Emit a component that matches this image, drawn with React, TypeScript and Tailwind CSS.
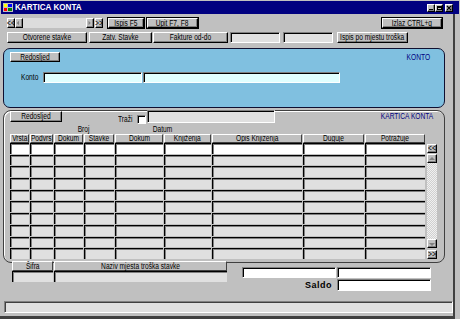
import React from "react";

const raised =
  "bg-[#c0c0c0] border border-t-white border-l-white border-r-black border-b-black shadow-[inset_-1px_-1px_0_#808080]";
const sunken =
  "border border-t-[#808080] border-l-[#808080] border-r-white border-b-white shadow-[inset_1px_1px_0_#000]";

function T({ children, o = "c" }: { children?: React.ReactNode; o?: "c" | "l" | "r" }) {
  const origin = o === "l" ? "origin-left" : o === "r" ? "origin-right" : "origin-center";
  return <span className={`inline-block whitespace-nowrap leading-none scale-x-[0.78] ${origin}`}>{children}</span>;
}

function Btn({ className = "", children }: { className?: string; children?: React.ReactNode }) {
  return (
    <div className={`${raised} flex items-center justify-center leading-none whitespace-nowrap ${className}`}>
      {children}
    </div>
  );
}

function DefBtn({ className = "", children }: { className?: string; children?: React.ReactNode }) {
  return (
    <div className={`border border-black flex ${className}`}>
      <div className={`${raised} flex-1 flex items-center justify-center leading-none whitespace-nowrap`}>
        {children}
      </div>
    </div>
  );
}

function Field({ className = "" }: { className?: string }) {
  return <div className={`${sunken} ${className}`} />;
}

function Tri({ dir }: { dir: "l" | "r" | "u" | "d" }) {
  const pts =
    dir === "l" ? "4,1 4,7 1,4" : dir === "r" ? "2,1 2,7 5,4" : dir === "u" ? "1,5 7,5 4,2" : "1,3 7,3 4,6";
  return (
    <svg width="8" height="8" viewBox="0 0 8 8">
      <polygon points={pts} fill="#808080" />
    </svg>
  );
}

const headers = [
  "Vrsta",
  "Podvrs",
  "Dokum",
  "Stavke",
  "Dokum",
  "Knjiženja",
  "Opis Knjizenja",
  "Duguje",
  "Potražuje",
];

const cellBase = "border-t border-l border-t-black border-l-black shadow-[inset_1px_1px_0_#808080]";

export default function App() {
  const rows = Array.from({ length: 10 }, (_, i) => i);
  return (
    <div className="w-[460px] h-[319px] bg-[#c0c0c0] overflow-hidden flex flex-col pt-[1px] text-[8.5px] text-black font-['Liberation_Sans',sans-serif]">
      {/* title bar */}
      <div className="h-[13px] mx-[1px] bg-[#000080] flex items-center pl-[2px] shrink-0">
        <svg width="10" height="9" viewBox="0 0 10 9">
          <rect x="0" y="0" width="10" height="9" fill="#c0c0c0" />
          <rect x="1" y="1" width="3" height="3" fill="#ffff00" />
          <rect x="5" y="1" width="4" height="3" fill="#0000ff" />
          <rect x="1" y="5" width="3" height="3" fill="#ff0000" />
          <rect x="5" y="5" width="4" height="3" fill="#008000" />
        </svg>
        <span className="ml-[2px] text-white font-bold text-[9px] leading-none inline-block scale-x-[0.9] origin-left">
          KARTICA KONTA
        </span>
        <div className="ml-auto mr-[6px] flex items-center">
          <div className={`${raised} w-[8px] h-[8px] flex items-end justify-center pb-[1px]`}>
            <div className="w-[4px] h-[1px] bg-black" />
          </div>
          <div className={`${raised} w-[8px] h-[8px] flex items-center justify-center`}>
            <div className="w-[5px] h-[4px] border border-black border-t-2" />
          </div>
          <div className={`${raised} ml-[2px] w-[8px] h-[8px] flex items-center justify-center`}>
            <svg width="6" height="6" viewBox="0 0 6 6">
              <path d="M1 1 L5 5 M5 1 L1 5" stroke="#000" strokeWidth="1.2" />
            </svg>
          </div>
        </div>
      </div>

      {/* body */}
      <div className="flex-1 w-[455px] flex flex-col border-r-2 border-b-[3px] border-r-[#404040] border-b-[#404040]">
        {/* row 1 */}
        <div className="mt-[3px] h-[12px] flex items-center pl-[7px] pr-[10px] shrink-0">
          <div className="w-[96px] h-[10px] flex">
            <Btn className="w-[8px] h-[10px]">
              <T>{"<<"}</T>
            </Btn>
            <Btn className="w-[8px] h-[10px]">
              <Tri dir="l" />
            </Btn>
            <div className="flex-1 h-[10px] bg-[#dcdcdc]" />
            <Btn className="w-[8px] h-[10px]">
              <Tri dir="r" />
            </Btn>
            <Btn className="ml-[1px] w-[8px] h-[10px]">
              <T>{">>"}</T>
            </Btn>
          </div>
          <DefBtn className="ml-[4px] w-[38px] h-[12px]">
            <T>Ispis F5</T>
          </DefBtn>
          <DefBtn className="ml-[1px] w-[53px] h-[12px]">
            <T>Upit F7, F8</T>
          </DefBtn>
          <DefBtn className="ml-auto w-[62px] h-[12px]">
            <T>Izlaz CTRL+q</T>
          </DefBtn>
        </div>

        {/* row 2 */}
        <div className="mt-[3px] h-[11px] flex pl-[7px] shrink-0">
          <Btn className="w-[80px] h-[11px]">
            <T>Otvorene stavke</T>
          </Btn>
          <Btn className="ml-[2px] w-[63px] h-[11px]">
            <T>Zatv. Stavke</T>
          </Btn>
          <Btn className="ml-[1px] w-[75px] h-[11px]">
            <T>Fakture od-do</T>
          </Btn>
          <Field className="ml-[2px] w-[50px] h-[11px] bg-[#e0e0e0]" />
          <Field className="ml-[3px] w-[50px] h-[11px] bg-[#e0e0e0]" />
          <Btn className="ml-[4px] w-[71px] h-[11px]">
            <T>Ispis po mjestu troška</T>
          </Btn>
        </div>

        {/* konto panel */}
        <div className="mt-[5px] ml-[3px] w-[442px] h-[60px] shrink-0 bg-[#80c0e0] border border-[#101030] rounded-[7px] flex flex-col">
          <div className="flex items-start pl-[6px] pt-[3px] pr-[14px]">
            <Btn className="w-[50px] h-[10px]">
              <T>Redosljed</T>
            </Btn>
            <span className="ml-auto -mt-[1px] text-[#000080]">
              <T o="r">KONTO</T>
            </span>
          </div>
          <div className="mt-[8px] flex items-center pl-[17px]">
            <span className="w-[22px] leading-none">
              <T o="l">Konto</T>
            </span>
            <Field className="w-[99px] h-[11px] bg-[#e0ffff]" />
            <Field className="ml-[1px] w-[197px] h-[11px] bg-[#e0ffff]" />
          </div>
        </div>

        {/* kartica panel */}
        <div className="mt-[2px] ml-[3px] w-[442px] h-[153px] shrink-0 border border-[#404040] rounded-[8px] shadow-[inset_1px_1px_0_#ffffff] flex flex-col">
          <div className="h-[13px] flex items-start shrink-0">
            <Btn className="ml-[6px] w-[52px] h-[11px]">
              <T>Redosljed</T>
            </Btn>
            <span className="ml-[56px] mt-[4px] w-[16px] leading-none">
              <T o="l">Traži</T>
            </span>
            <div className="ml-[3px] mt-[4px] w-[9px] h-[9px] bg-white border border-t-[#808080] border-l-[#808080] border-r-white border-b-white shadow-[inset_1px_1px_0_#000]" />
            <Field className="ml-[1px] -mt-[1px] w-[128px] h-[13px] bg-[#e0e0e0]" />
            <span className="ml-auto mr-[11px] mt-[1px] text-[#000080] leading-none">
              <T o="r">KARTICA KONTA</T>
            </span>
          </div>
          <div className="h-[10px] pl-[6px] shrink-0 grid grid-cols-[19px_23px_29px_30px_48px_47px_90px_61px_60px] gap-x-[1px] items-end">
            <div className="col-start-3 col-span-2 text-center leading-none pb-[1px]">
              <T>Broj</T>
            </div>
            <div className="col-start-5 col-span-2 text-center leading-none pb-[1px]">
              <T>Datum</T>
            </div>
          </div>
          <div className="h-[9px] pl-[6px] shrink-0 grid grid-cols-[19px_23px_29px_30px_48px_47px_90px_61px_60px] gap-x-[1px]">
            {headers.map((h, i) => (
              <div
                key={i}
                className="bg-[#c0c0c0] border border-t-white border-l-white border-r-[#404040] border-b-[#404040] flex items-center justify-center leading-none whitespace-nowrap overflow-hidden"
              >
                <T>{h}</T>
              </div>
            ))}
          </div>
          <div className="flex pl-[6px] shrink-0">
            <div className="h-[116px] grid grid-cols-[19px_23px_29px_30px_48px_47px_90px_61px_60px] grid-rows-10 gap-x-[1px] gap-y-[1px]">
              {rows.map((r) =>
                headers.map((_, c) => (
                  <div
                    key={`${r}-${c}`}
                    className={`${cellBase} ${r === 0 ? "bg-white" : "bg-[#e0e0e0]"}`}
                  />
                ))
              )}
            </div>
            <div className="ml-[2px] mt-[1px] w-[10px] h-[115px] flex flex-col">
              <Btn className="h-[9px]">
                <T>{"<<"}</T>
              </Btn>
              <Btn className="mt-[1px] h-[9px]">
                <Tri dir="u" />
              </Btn>
              <div className="flex-1 bg-[repeating-conic-gradient(#d0d0d0_0%_25%,#f0f0f0_0%_50%)] bg-[length:2px_2px]" />
              <Btn className="h-[9px]">
                <Tri dir="d" />
              </Btn>
              <Btn className="mt-[2px] h-[9px]">
                <T>{">>"}</T>
              </Btn>
            </div>
          </div>
        </div>

        {/* bottom section */}
        <div className="-mt-[2px] flex items-start shrink-0">
          <div className="ml-[12px] grid grid-cols-[41px_173px] gap-x-[1px]">
            <div className="h-[10px] bg-[#c0c0c0] border border-t-white border-l-white border-r-[#404040] border-b-[#404040] flex items-center justify-center leading-none">
              <T>Šifra</T>
            </div>
            <div className="h-[10px] bg-[#c0c0c0] border border-t-white border-l-white border-r-[#404040] border-b-[#404040] flex items-center justify-center leading-none">
              <T>Naziv mjesta troška stavke</T>
            </div>
            <div className={`h-[11px] ${cellBase} bg-[#e0e0e0]`} />
            <div className={`h-[11px] ${cellBase} bg-[#e0e0e0]`} />
          </div>
          <div className="ml-[15px] mt-[6px] flex flex-col">
            <div className="flex">
              <Field className="w-[94px] h-[11px] bg-white" />
              <Field className="ml-[1px] w-[94px] h-[11px] bg-white" />
            </div>
            <div className="mt-[1px] flex items-center">
              <span className="w-[92px] pr-[2px] text-right font-bold text-[9px] tracking-[0.5px] leading-none">
                Saldo
              </span>
              <Field className="ml-[3px] w-[94px] h-[12px] bg-white" />
            </div>
          </div>
        </div>

        {/* status bar */}
        <div className="mt-auto mb-[3px] ml-[4px] w-[449px] h-[12px] shrink-0 bg-[#e0e0e0] border border-t-[#808080] border-l-[#808080] border-r-white border-b-white shadow-[inset_1px_1px_0_#404040]" />
      </div>
    </div>
  );
}
